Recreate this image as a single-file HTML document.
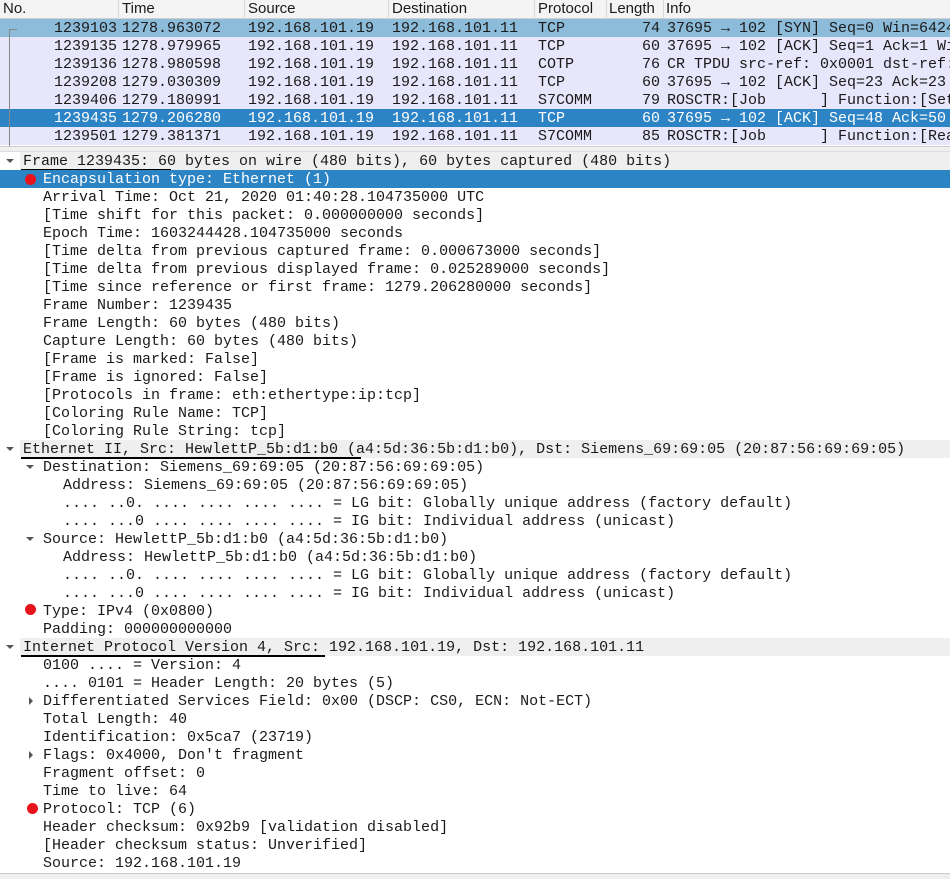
<!DOCTYPE html>
<html><head><meta charset="utf-8"><style>
*{margin:0;padding:0;box-sizing:border-box}
body{width:950px;height:879px;overflow:hidden;background:#fff;position:relative;font-family:"Liberation Mono",monospace;font-size:15px;color:#1a1a1a}
.hdr{position:absolute;top:0;left:0;width:950px;height:19px;background:#f4f4f4;border-bottom:1px solid #cfcfcf;font-family:"Liberation Sans",sans-serif;font-size:15px}
.hdr span{position:absolute;top:0px}
.hdr i{position:absolute;top:0;width:1px;height:19px;background:#d8d8d8}
.pr{position:absolute;left:0;width:950px;height:18px;background:#e7e6fb;white-space:pre;line-height:18px}
.pr span{position:absolute;top:1px}
.pr .r{text-align:right}
.d{position:absolute;left:0;width:950px;height:18px;line-height:18px;white-space:pre;padding-top:1px}
.h{background:#efefef}
.sel{background:#2c84c4;color:#fff}
.dot{position:absolute;width:11px;height:11px;border-radius:50%;background:#e8121b}
.ul{position:absolute;height:2px;background:#000}
.tri{position:absolute;width:0;height:0}
.down{border-left:4px solid transparent;border-right:4px solid transparent;border-top:4px solid #555}
.right{border-top:4px solid transparent;border-bottom:4px solid transparent;border-left:4px solid #555}
.a{display:inline-block;width:9px;text-align:center;font-size:13px}
</style></head><body>
<div class="hdr">
<span style="left:3px">No.</span><i style="left:118px"></i>
<span style="left:122px">Time</span><i style="left:244px"></i>
<span style="left:248px">Source</span><i style="left:388px"></i>
<span style="left:392px">Destination</span><i style="left:534px"></i>
<span style="left:538px">Protocol</span><i style="left:606px"></i>
<span style="left:609px">Length</span><i style="left:663px"></i>
<span style="left:666px">Info</span>
</div>

<div class="pr" style="top:19px;background:#8dbcdb"><span class="r" style="left:40px;width:77px">1239103</span><span style="left:122px">1278.963072</span><span style="left:248px">192.168.101.19</span><span style="left:392px">192.168.101.11</span><span style="left:538px">TCP</span><span class="r" style="left:600px;width:60px">74</span><span style="left:667px">37695 → 102 [SYN] Seq=0 Win=64240</span></div>
<div class="pr" style="top:37px"><span class="r" style="left:40px;width:77px">1239135</span><span style="left:122px">1278.979965</span><span style="left:248px">192.168.101.19</span><span style="left:392px">192.168.101.11</span><span style="left:538px">TCP</span><span class="r" style="left:600px;width:60px">60</span><span style="left:667px">37695 → 102 [ACK] Seq=1 Ack=1 Win</span></div>
<div class="pr" style="top:55px"><span class="r" style="left:40px;width:77px">1239136</span><span style="left:122px">1278.980598</span><span style="left:248px">192.168.101.19</span><span style="left:392px">192.168.101.11</span><span style="left:538px">COTP</span><span class="r" style="left:600px;width:60px">76</span><span style="left:667px">CR TPDU src-ref: 0x0001 dst-ref:</span></div>
<div class="pr" style="top:73px"><span class="r" style="left:40px;width:77px">1239208</span><span style="left:122px">1279.030309</span><span style="left:248px">192.168.101.19</span><span style="left:392px">192.168.101.11</span><span style="left:538px">TCP</span><span class="r" style="left:600px;width:60px">60</span><span style="left:667px">37695 → 102 [ACK] Seq=23 Ack=23 W</span></div>
<div class="pr" style="top:91px"><span class="r" style="left:40px;width:77px">1239406</span><span style="left:122px">1279.180991</span><span style="left:248px">192.168.101.19</span><span style="left:392px">192.168.101.11</span><span style="left:538px">S7COMM</span><span class="r" style="left:600px;width:60px">79</span><span style="left:667px">ROSCTR:[Job      ] Function:[Setup</span></div>
<div class="pr" style="top:109px;background:#2c84c4;color:#fff"><span class="r" style="left:40px;width:77px">1239435</span><span style="left:122px">1279.206280</span><span style="left:248px">192.168.101.19</span><span style="left:392px">192.168.101.11</span><span style="left:538px">TCP</span><span class="r" style="left:600px;width:60px">60</span><span style="left:667px">37695 → 102 [ACK] Seq=48 Ack=50 W</span></div>
<div class="pr" style="top:127px"><span class="r" style="left:40px;width:77px">1239501</span><span style="left:122px">1279.381371</span><span style="left:248px">192.168.101.19</span><span style="left:392px">192.168.101.11</span><span style="left:538px">S7COMM</span><span class="r" style="left:600px;width:60px">85</span><span style="left:667px">ROSCTR:[Job      ] Function:[Read</span></div>
<div style="position:absolute;left:9px;top:29px;width:1px;height:117px;background:#888"></div>
<div style="position:absolute;left:9px;top:29px;width:8px;height:1px;background:#888"></div>
<div style="position:absolute;left:0;top:146px;width:950px;height:6px;background:#f0f0f0;border-top:1px solid #ccc;border-bottom:1px solid #ddd"></div>

<div class="d h" style="top:152px;left:20px;width:930px"><span style="position:absolute;left:3px">Frame 1239435: 60 bytes on wire (480 bits), 60 bytes captured (480 bits)</span></div>
<div class="tri down" style="left:6px;top:159px"></div>
<div class="ul" style="left:21px;top:169px;width:150px"></div>
<div class="d sel" style="top:170px"><span style="position:absolute;left:43px">Encapsulation type: Ethernet (1)</span></div>
<div class="dot" style="left:25px;top:174px"></div>

<div class="d" style="top:188px;padding-left:43px">Arrival Time: Oct 21, 2020 01:40:28.104735000 UTC</div>
<div class="d" style="top:206px;padding-left:43px">[Time shift for this packet: 0.000000000 seconds]</div>
<div class="d" style="top:224px;padding-left:43px">Epoch Time: 1603244428.104735000 seconds</div>
<div class="d" style="top:242px;padding-left:43px">[Time delta from previous captured frame: 0.000673000 seconds]</div>
<div class="d" style="top:260px;padding-left:43px">[Time delta from previous displayed frame: 0.025289000 seconds]</div>
<div class="d" style="top:278px;padding-left:43px">[Time since reference or first frame: 1279.206280000 seconds]</div>
<div class="d" style="top:296px;padding-left:43px">Frame Number: 1239435</div>
<div class="d" style="top:314px;padding-left:43px">Frame Length: 60 bytes (480 bits)</div>
<div class="d" style="top:332px;padding-left:43px">Capture Length: 60 bytes (480 bits)</div>
<div class="d" style="top:350px;padding-left:43px">[Frame is marked: False]</div>
<div class="d" style="top:368px;padding-left:43px">[Frame is ignored: False]</div>
<div class="d" style="top:386px;padding-left:43px">[Protocols in frame: eth:ethertype:ip:tcp]</div>
<div class="d" style="top:404px;padding-left:43px">[Coloring Rule Name: TCP]</div>
<div class="d" style="top:422px;padding-left:43px">[Coloring Rule String: tcp]</div>

<div class="d h" style="top:440px;left:20px;width:930px"><span style="position:absolute;left:3px">Ethernet II, Src: HewlettP_5b:d1:b0 (a4:5d:36:5b:d1:b0), Dst: Siemens_69:69:05 (20:87:56:69:69:05)</span></div>
<div class="tri down" style="left:6px;top:447px"></div>
<div class="ul" style="left:21px;top:457px;width:340px"></div>
<div class="d" style="top:458px;padding-left:43px">Destination: Siemens_69:69:05 (20:87:56:69:69:05)</div>
<div class="tri down" style="left:26px;top:465px"></div>
<div class="d" style="top:476px;padding-left:63px">Address: Siemens_69:69:05 (20:87:56:69:69:05)</div>
<div class="d" style="top:494px;padding-left:63px">.... ..0. .... .... .... .... = LG bit: Globally unique address (factory default)</div>
<div class="d" style="top:512px;padding-left:63px">.... ...0 .... .... .... .... = IG bit: Individual address (unicast)</div>
<div class="d" style="top:530px;padding-left:43px">Source: HewlettP_5b:d1:b0 (a4:5d:36:5b:d1:b0)</div>
<div class="tri down" style="left:26px;top:537px"></div>
<div class="d" style="top:548px;padding-left:63px">Address: HewlettP_5b:d1:b0 (a4:5d:36:5b:d1:b0)</div>
<div class="d" style="top:566px;padding-left:63px">.... ..0. .... .... .... .... = LG bit: Globally unique address (factory default)</div>
<div class="d" style="top:584px;padding-left:63px">.... ...0 .... .... .... .... = IG bit: Individual address (unicast)</div>
<div class="d" style="top:602px;padding-left:43px">Type: IPv4 (0x0800)</div>
<div class="dot" style="left:25px;top:604px"></div>
<div class="d" style="top:620px;padding-left:43px">Padding: 000000000000</div>

<div class="d h" style="top:638px;left:20px;width:930px"><span style="position:absolute;left:3px">Internet Protocol Version 4, Src: 192.168.101.19, Dst: 192.168.101.11</span></div>
<div class="tri down" style="left:6px;top:645px"></div>
<div class="ul" style="left:21px;top:655px;width:304px"></div>
<div class="d" style="top:656px;padding-left:43px">0100 .... = Version: 4</div>
<div class="d" style="top:674px;padding-left:43px">.... 0101 = Header Length: 20 bytes (5)</div>
<div class="d" style="top:692px;padding-left:43px">Differentiated Services Field: 0x00 (DSCP: CS0, ECN: Not-ECT)</div>
<div class="tri right" style="left:29px;top:697px"></div>
<div class="d" style="top:710px;padding-left:43px">Total Length: 40</div>
<div class="d" style="top:728px;padding-left:43px">Identification: 0x5ca7 (23719)</div>
<div class="d" style="top:746px;padding-left:43px">Flags: 0x4000, Don't fragment</div>
<div class="tri right" style="left:29px;top:751px"></div>
<div class="d" style="top:764px;padding-left:43px">Fragment offset: 0</div>
<div class="d" style="top:782px;padding-left:43px">Time to live: 64</div>
<div class="d" style="top:800px;padding-left:43px">Protocol: TCP (6)</div>
<div class="dot" style="left:27px;top:803px"></div>
<div class="d" style="top:818px;padding-left:43px">Header checksum: 0x92b9 [validation disabled]</div>
<div class="d" style="top:836px;padding-left:43px">[Header checksum status: Unverified]</div>
<div class="d" style="top:854px;padding-left:43px">Source: 192.168.101.19</div>
<div style="position:absolute;left:0;top:873px;width:950px;height:6px;background:#efefef;border-top:1px solid #ccc"></div>
</body></html>
